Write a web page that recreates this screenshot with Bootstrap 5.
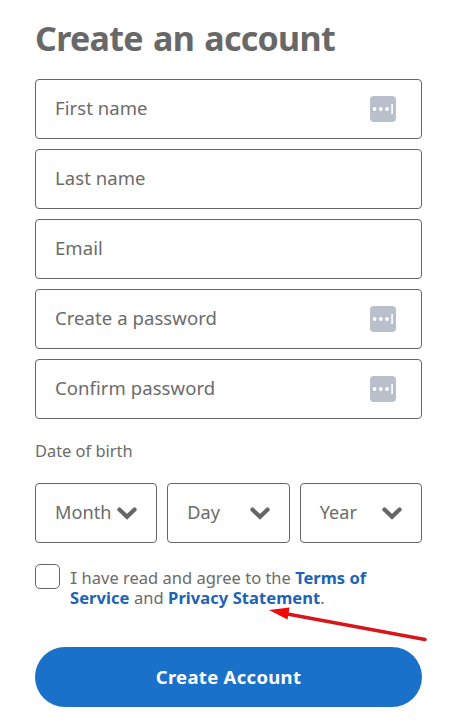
<!DOCTYPE html>
<html lang="en">
<head>
<meta charset="utf-8">
<meta name="viewport" content="width=device-width, initial-scale=1">
<title>Create an account</title>
<link href="https://cdn.jsdelivr.net/npm/bootstrap@5.3.0/dist/css/bootstrap.min.css" rel="stylesheet">
<style>
body{font-family:"Noto Sans",sans-serif;color:#6b6b6b;background:#fff;overflow:hidden}
.signup{width:454px;height:726px;padding:17px 32px 0 35px}
.title{font-size:34px;line-height:42px;font-weight:700;letter-spacing:-.7px;word-spacing:2px;height:62px;color:#686868;white-space:nowrap}
.field{height:60px;border:1px solid #666;border-radius:4px;padding:0 25px 0 19px;font-size:18.5px;line-height:26px;white-space:nowrap}
.field span{padding-bottom:2px;letter-spacing:.07px}
.dob{font-size:16.4px;line-height:24px;margin-top:20px;margin-bottom:20px}
.pick{padding-right:19px;font-size:18.1px}
.agree{margin-top:21px;height:83px;font-size:16.5px;line-height:20px}
.agree-text{padding-top:4px;padding-left:10px;white-space:nowrap}
.agree-text a{color:#2063b5;font-weight:700;text-decoration:none}
.line-two{letter-spacing:.07px}
.tick{width:25px;height:25px;border:1px solid #666;border-radius:5px;flex:none}
.serif-i{font-family:Inter,sans-serif;font-feature-settings:"cv08"}
.submit{height:60px;background:#1971c9;color:#fff;font-size:18.5px;letter-spacing:.3px;font-weight:700;border:0}
.pointer{left:264px;top:600px}
</style>
<script src="https://cdn.jsdelivr.net/npm/bootstrap@5.3.0/dist/js/bootstrap.bundle.min.js"></script>
</head>
<body>
<svg class="d-none">
<symbol id="key" viewBox="0 0 26 26"><rect width="26" height="26" rx="4" fill="#b9bfcb"/><g fill="#fff"><circle cx="4.6" cy="13" r="1.9"/><circle cx="10.8" cy="13" r="1.9"/><circle cx="17" cy="13" r="1.9"/><rect x="21.3" y="8" width="1.6" height="10"/></g></symbol>
<symbol id="chev" viewBox="0 0 20 13"><path d="M2.4 2.6 10 9.8l7.6-7.2" fill="none" stroke="#666" stroke-width="4.2" stroke-linecap="round"/></symbol>
</svg>
<main class="signup position-relative">
<h1 class="title m-0">Create an account</h1>
<div class="d-flex flex-column" style="gap:10px">
<div class="field d-flex align-items-center justify-content-between"><span>First name</span><svg width="26" height="26"><use href="#key"/></svg></div>
<div class="field d-flex align-items-center"><span>Last name</span></div>
<div class="field d-flex align-items-center"><span>Email</span></div>
<div class="field d-flex align-items-center justify-content-between"><span>Create a password</span><svg width="26" height="26"><use href="#key"/></svg></div>
<div class="field d-flex align-items-center justify-content-between"><span>Confirm password</span><svg width="26" height="26"><use href="#key"/></svg></div>
</div>
<div class="dob">Date of birth</div>
<div class="d-flex" style="gap:10px">
<div class="field pick d-flex align-items-center justify-content-between flex-fill w-100"><span>Month</span><svg width="20" height="13"><use href="#chev"/></svg></div>
<div class="field pick d-flex align-items-center justify-content-between flex-fill w-100"><span>Day</span><svg width="20" height="13"><use href="#chev"/></svg></div>
<div class="field pick d-flex align-items-center justify-content-between flex-fill w-100"><span>Year</span><svg width="20" height="13"><use href="#chev"/></svg></div>
</div>
<div class="agree d-flex"><span class="tick"></span><div class="agree-text"><span class="serif-i">I</span> have read and agree to the <a href="#">Terms of</a><br><span class="line-two"><a href="#">Service</a> and <a href="#">Privacy Statement</a>.</span></div></div>
<button class="btn submit rounded-pill w-100">Create Account</button>
<svg class="pointer position-absolute" width="170" height="46" viewBox="264 600 170 46"><path d="M286 613.8 425 639.5" stroke="#d8151b" stroke-width="3.6" stroke-linecap="round"/><path d="M269 610 289.5 607.5 287.5 619.5Z" fill="#f00a0a"/></svg>
</main>
</body>
</html>
